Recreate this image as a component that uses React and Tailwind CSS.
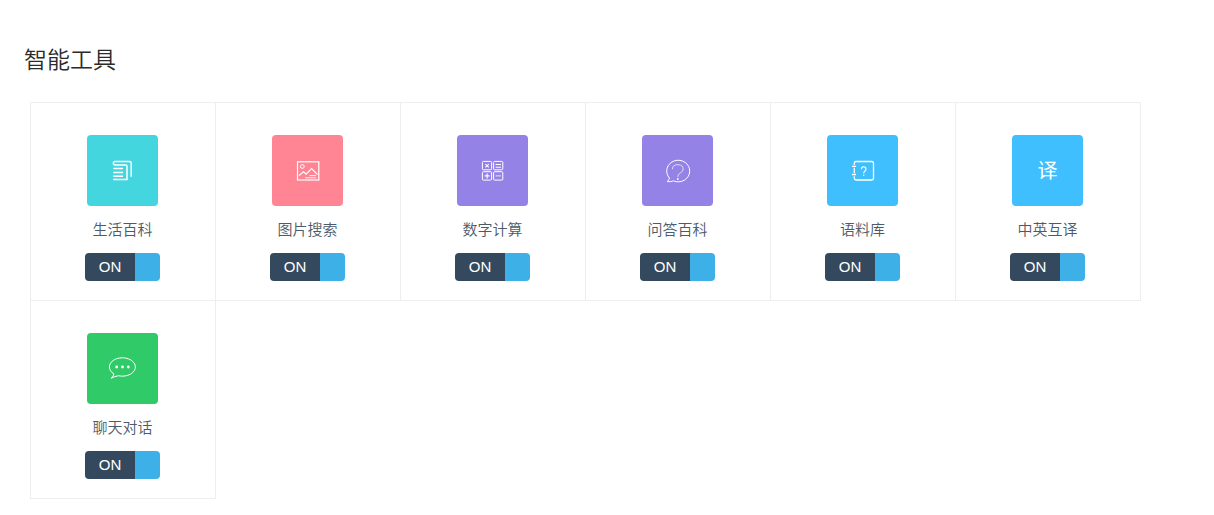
import { useState } from "react";

function Glyph({ children }) {
  return (
    <svg width="71" height="71" viewBox="0 0 71 71" fill="none" stroke="#fff" strokeWidth="1" aria-hidden="true">
      {children}
    </svg>
  );
}

const icons = {
  book: (
    <Glyph>
      <g strokeWidth="1.5">
        <path d="M40 44.5V31.2Q40 30 38.8 30H28Q26.3 30 26.3 28.3T28 26.5H42.5Q44.2 26.5 44.2 28.2V41.8" />
        <path d="M26.3 33.6H36M26.3 37.4H36M26.3 41.2H36M26.3 44.5H40.6" />
      </g>
    </Glyph>
  ),
  image: (
    <Glyph>
      <rect x="25.5" y="26.8" width="21.3" height="18.2" strokeWidth="1.2" />
      <circle cx="30.3" cy="31.5" r="1.9" />
      <path d="M27 40.5L31.5 36.8L34.2 39.2L39.5 33.6L45.5 39.5" strokeWidth="1.1" />
      <path d="M37.5 40.6H44M33 42.8H44" strokeWidth="0.9" />
    </Glyph>
  ),
  calc: (
    <Glyph>
      <rect x="25.4" y="26.4" width="9.2" height="8.4" rx="1" />
      <rect x="36.6" y="26.4" width="9.2" height="8.4" rx="1" />
      <rect x="25.4" y="36.7" width="9.2" height="8.4" rx="1" />
      <rect x="36.6" y="36.7" width="9.2" height="8.4" rx="1" />
      <path d="M28.4 29.1L31.8 32.3M31.8 29.1L28.4 32.3M38.6 29.5H44M38.6 32.3H44M27.6 40.9H32.6M30.1 38.4V43.4" strokeWidth="1.1" />
      <path d="M38.6 40.9H44" strokeWidth="0.8" />
    </Glyph>
  ),
  question: (
    <Glyph>
      <path d="M27.5 43.1A11.5 10.8 0 1 1 31.5 45.9Q29 47 25.3 46.6Q27 45 27.5 43.1Z" />
      <path d="M30.4 34.2Q30.4 29.7 35.8 29.7T41.2 34.1Q41.2 36.3 38.3 37.9Q35.8 39.2 35.8 42" strokeWidth="0.7" />
      <circle cx="35.8" cy="44" r="0.9" fill="#fff" stroke="none" />
    </Glyph>
  ),
  notebook: (
    <Glyph>
      <g strokeWidth="1.3">
        <path d="M27.3 30V28.3Q27.3 26.5 29 26.5H44.8Q46.5 26.5 46.5 28.3V43.2Q46.5 45 44.8 45H29Q27.3 45 27.3 43.2V41.3M27.3 32.8V38" />
        <path d="M25 31.3H29M25 39.5H29" />
        <path d="M34.4 34.2Q34.4 31.7 36.7 31.7T39 34Q39 35.2 37.7 36.2Q36.7 37 36.7 38.4" strokeWidth="1.1" />
      </g>
      <circle cx="36.7" cy="40.3" r="0.7" fill="#fff" stroke="none" />
    </Glyph>
  ),
  chat: (
    <Glyph>
      <path d="M27 41A13 9.2 0 1 1 31.5 42.75Q28 43.2 24.3 45.2Q26.2 43.2 27 41Z" />
      <g fill="#fff" stroke="none">
        <circle cx="29.7" cy="34" r="1.4" />
        <circle cx="35.5" cy="34" r="1.4" />
        <circle cx="41.3" cy="34" r="1.4" />
      </g>
    </Glyph>
  ),
  translate: <span className="text-xl leading-none text-white">译</span>,
};

const tools = [
  { name: "生活百科", icon: "book", color: "bg-[#44d6df]" },
  { name: "图片搜索", icon: "image", color: "bg-[#ff8594]" },
  { name: "数字计算", icon: "calc", color: "bg-[#9482e6]" },
  { name: "问答百科", icon: "question", color: "bg-[#9482e6]" },
  { name: "语料库", icon: "notebook", color: "bg-[#40bfff]" },
  { name: "中英互译", icon: "translate", color: "bg-[#40bfff]" },
  { name: "聊天对话", icon: "chat", color: "bg-[#30ca69]" },
];

function Switch({ id }) {
  const [on, setOn] = useState(true);
  return (
    <label htmlFor={id} className="relative flex h-7 w-[75px] cursor-pointer overflow-hidden rounded">
      <input
        id={id}
        type="checkbox"
        role="switch"
        aria-labelledby={id + "-name"}
        checked={on}
        onChange={(e) => setOn(e.target.checked)}
        className="peer sr-only"
      />
      <span className="flex w-[50px] items-center justify-center bg-[#34495e] text-[15px] text-white peer-focus-visible:underline">
        {on ? "ON" : "OFF"}
      </span>
      <span className="flex-1 bg-[#3db0e8] peer-not-checked:-order-1 peer-not-checked:bg-gray-400" />
    </label>
  );
}

export default function App() {
  return (
    <main className="min-h-screen bg-white px-6 pt-11 pb-4 font-['Liberation_Sans','Noto_Sans_CJK_SC',sans-serif]">
      <h1 className="text-[23px] leading-8 font-[350] text-[#2b2b2b]">智能工具</h1>
      <ul className="mt-[27px] ml-[7px] grid grid-cols-[repeat(auto-fill,185px)]">
        {tools.map((t, i) => (
          <li
            key={t.name}
            className="-mt-px -ml-px flex flex-col items-center border border-[#eee] pt-8 pr-px pb-[19px]"
          >
            <div className={"flex size-[71px] items-center justify-center rounded " + t.color}>{icons[t.icon]}</div>
            <p id={"tool-" + i + "-name"} className="my-3 text-[15px] leading-[23px] font-[350] text-[#4c5b6b]">
              {t.name}
            </p>
            <Switch id={"tool-" + i} />
          </li>
        ))}
      </ul>
    </main>
  );
}
